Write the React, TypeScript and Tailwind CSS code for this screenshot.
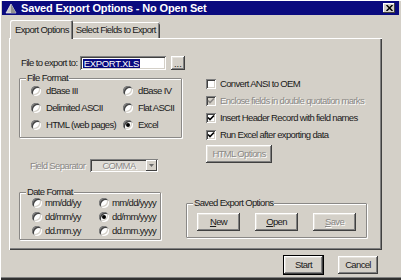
import React from "react";

const font = "font-['Liberation_Sans',Arial,sans-serif]";
const raised =
  "shadow-[inset_-1px_-1px_#404040,inset_1px_1px_#ffffff,inset_-2px_-2px_#808080,inset_2px_2px_#e4e1db]";
const sunken =
  "shadow-[inset_1px_1px_#808080,inset_-1px_-1px_#ffffff,inset_2px_2px_#404040,inset_-2px_-2px_#d4d0c8]";
const disabledText = "text-[#8a8886] [text-shadow:1px_1px_0_#ffffff]";
const group =
  "border border-[#8a8886] shadow-[inset_1px_1px_#ffffff,1px_1px_#ffffff] rounded-[1px]";

function Radio({ checked, label, gap = "ml-[5px]" }: { checked?: boolean; label: string; gap?: string }) {
  return (
    <div className="flex items-center h-full">
      <span
        className={`w-[10px] h-[10px] rounded-full bg-white shrink-0 flex items-center justify-center ${sunken}`}
      >
        {checked && <span className="w-[4px] h-[4px] rounded-full bg-black" />}
      </span>
      <span className={`${gap} text-[#1a1a1a] whitespace-nowrap`}>{label}</span>
    </div>
  );
}

function Check({ checked, disabled, label }: { checked?: boolean; disabled?: boolean; label: string }) {
  return (
    <div className="flex items-center h-[17px]">
      <span
        className={`w-[10px] h-[10px] shrink-0 flex items-center justify-center ${sunken} ${
          disabled ? "bg-[#d4d0c8]" : "bg-white"
        }`}
      >
        {checked && (
          <svg width="8" height="8" viewBox="0 0 8 8">
            <path
              d="M1 3.5 L3 5.5 L7 1.5"
              stroke={disabled ? "#8a8886" : "#000"}
              strokeWidth="1.6"
              fill="none"
            />
          </svg>
        )}
      </span>
      <span className={`ml-[4px] whitespace-nowrap ${disabled ? disabledText : "text-[#1a1a1a]"}`}>
        {label}
      </span>
    </div>
  );
}

function Btn({
  children,
  w,
  disabled,
  def,
}: {
  children: React.ReactNode;
  w: string;
  disabled?: boolean;
  def?: boolean;
}) {
  return (
    <div
      className={`${w} h-[18px] flex items-center justify-center bg-[#d4d0c8] ${raised} ${
        def ? "outline outline-1 outline-black" : ""
      } ${disabled ? disabledText : "text-[#1a1a1a]"}`}
    >
      {children}
    </div>
  );
}

export default function App() {
  return (
    <div
      className={`${font} text-[9.5px] leading-[10px] tracking-[-0.65px] w-[401px] h-[280px] bg-[#d4d0c8] overflow-hidden flex flex-col shadow-[inset_1px_1px_#ffffff,inset_0_-2px_#303030,inset_0_-3px_#808080]`}
    >
      {/* Title bar */}
      <div className="mx-[2px] mt-[1px] h-[14px] bg-[#0a0a7e] flex items-center">
        <svg width="12" height="11" viewBox="0 0 12 11" className="ml-[3px]">
          <path d="M6 1 L11 10 L1 10 Z" fill="#c8c8c8" stroke="#ffffff" strokeWidth="0.6" />
          <path d="M6 1 L6 10 L11 10 Z" fill="#909090" />
        </svg>
        <span className="ml-[4px] text-white font-bold text-[11px] leading-[11px] tracking-[-0.15px] whitespace-nowrap">
          Saved Export Options - No Open Set
        </span>
        <div
          className={`ml-auto mr-[4px] w-[12px] h-[10px] bg-[#d4d0c8] flex items-center justify-center shadow-[inset_-1px_-1px_#404040,inset_1px_1px_#ffffff]`}
        >
          <svg width="7" height="6" viewBox="0 0 7 6">
            <path d="M0.5 0 L6.5 6 M6.5 0 L0.5 6" stroke="#000" strokeWidth="1.5" />
          </svg>
        </div>
      </div>

      {/* Tabs */}
      <div className="mt-[5px] h-[18px] flex items-end pl-[10px] relative z-10">
        <div className="h-[19px] -mb-[1px] bg-[#d4d0c8] pl-[5px] pr-[4px] flex items-center text-[#1a1a1a] shadow-[inset_1px_1px_#ffffff,inset_-1px_0_#404040,inset_-2px_0_#808080] rounded-t-[2px]">
          Export Options
        </div>
        <div className="h-[16px] pl-[3px] pr-[4px] flex items-center text-[#1a1a1a] shadow-[inset_0_1px_#ffffff,inset_-1px_0_#404040,inset_-2px_0_#808080] rounded-tr-[2px]">
          Select Fields to Export
        </div>
      </div>

      {/* Panel */}
      <div className="ml-[9px] w-[373px] h-[212px] flex shadow-[inset_1px_1px_#ffffff,inset_-1px_-1px_#404040,inset_-2px_-2px_#808080]">
        {/* Left column */}
        <div className="w-[176px] pl-[10px] pt-[18px] flex flex-col">
          <div className="h-[14px] flex items-center">
            <span className="ml-[2px] w-[62px] text-[#1a1a1a] whitespace-nowrap">File to export to:</span>
            <div className={`w-[91px] h-[14px] bg-white flex items-center pl-[3px] ${sunken}`}>
              <span className="bg-[#0a0a7e] text-white px-[1px] leading-[9px] tracking-[-0.3px]">EXPORT.XLS</span>
            </div>
            <div className={`ml-[5px] w-[15px] h-[14px] flex items-end justify-center pb-[3px] bg-[#d4d0c8] ${raised}`}>
              <span className="leading-[6px] text-[#1a1a1a] tracking-normal">...</span>
            </div>
          </div>

          <fieldset className={`mt-[3px] w-[163px] ${group} pl-[11px] pb-[4px]`}>
            <legend className="-ml-[5px] px-[1px] bg-[#d4d0c8] text-[#1a1a1a] leading-[10px]">File Format</legend>
            <div className="grid grid-cols-[92px_1fr] auto-rows-[17px] -mt-[1px]">
              <Radio label="dBase III" />
              <Radio label="dBase IV" />
              <Radio label="Delimited ASCII" />
              <Radio label="Flat ASCII" />
              <Radio label="HTML (web pages)" />
              <Radio label="Excel" checked />
            </div>
          </fieldset>

          <div className="mt-[21px] h-[13px] flex items-center">
            <span className={`pl-[11px] w-[71px] whitespace-nowrap ${disabledText}`}>Field Separator</span>
            <div className={`w-[68px] h-[13px] bg-[#dedbd5] flex items-center ${sunken}`}>
              <span className={`flex-1 text-center pl-[2px] ${disabledText}`}>COMMA</span>
              <div
                className={`w-[11px] h-[11px] mr-[1px] bg-[#d4d0c8] flex items-center justify-center shadow-[inset_-1px_-1px_#404040,inset_1px_1px_#ffffff]`}
              >
                <svg width="5" height="3" viewBox="0 0 5 3">
                  <path d="M0 0 L5 0 L2.5 3 Z" fill="#6a6a6a" />
                </svg>
              </div>
            </div>
          </div>

          <fieldset className={`mt-[15px] w-[142px] ${group} pl-[12px] pb-[1px]`}>
            <legend className="-ml-[6px] px-[1px] bg-[#d4d0c8] text-[#1a1a1a] leading-[10px]">Date Format</legend>
            <div className="grid grid-cols-[67px_1fr] auto-rows-[14px] -mt-[1px]">
              <Radio label="mm/dd/yy" gap="ml-[3px]" />
              <Radio label="mm/dd/yyyy" gap="ml-[3px]" />
              <Radio label="dd/mm/yy" gap="ml-[3px]" />
              <Radio label="dd/mm/yyyy" gap="ml-[3px]" checked />
              <Radio label="dd.mm.yy" gap="ml-[3px]" />
              <Radio label="dd.mm.yyyy" gap="ml-[3px]" />
            </div>
          </fieldset>
        </div>

        {/* Right column */}
        <div className="ml-[1px] w-[181px] pt-[37px] flex flex-col">
          <div className="pl-[20px] flex flex-col">
            <Check label="Convert ANSI to OEM" />
            <Check label="Enclose fields in double quotation marks" checked disabled />
            <Check label="Insert Header Record with field names" checked />
            <Check label="Run Excel after exporting data" checked />
            <div className="mt-[2px]">
              <Btn w="w-[66px]" disabled>
                HTML Options
              </Btn>
            </div>
          </div>

          <fieldset className={`mt-[35px] w-[181px] ${group} pl-[10px] pb-[6px]`}>
            <legend className="-ml-[4px] px-[1px] bg-[#d4d0c8] text-[#1a1a1a] leading-[10px]">
              Saved Export Options
            </legend>
            <div className="pt-[5px] flex gap-[15px]">
              <Btn w="w-[43px]">
                <span>
                  <span className="underline">N</span>ew
                </span>
              </Btn>
              <Btn w="w-[43px]">
                <span>
                  <span className="underline">O</span>pen
                </span>
              </Btn>
              <Btn w="w-[43px]" disabled>
                <span>
                  <span className="underline">S</span>ave
                </span>
              </Btn>
            </div>
          </fieldset>
        </div>
      </div>

      {/* Bottom buttons */}
      <div className="mt-[6px] flex justify-end gap-[15px] pr-[23px]">
        <Btn w="w-[39px]" def>
          Start
        </Btn>
        <Btn w="w-[40px]">Cancel</Btn>
      </div>
    </div>
  );
}
